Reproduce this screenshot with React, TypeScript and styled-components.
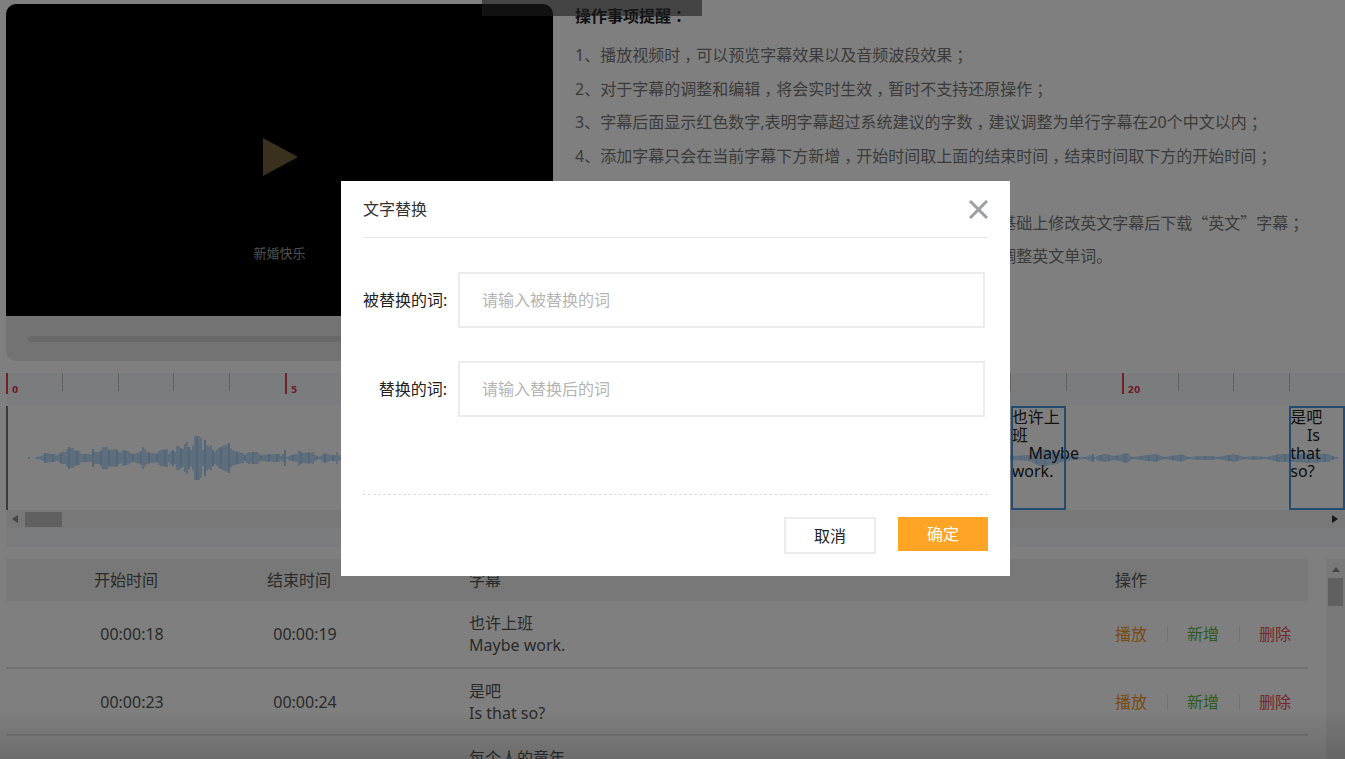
import React from 'react';
import styled, { createGlobalStyle, css } from 'styled-components';

const sans = `"Noto Sans", "Noto Sans CJK SC", sans-serif`;

const GlobalStyle = createGlobalStyle`
  *, *::before, *::after { box-sizing: border-box; }
  body {
    margin: 0;
    background: #fff;
    color: #333;
    font-family: ${sans};
    font-size: 16px;
    line-height: 22px;
  }
  button, input { font: inherit; }
`;

const Page = styled.div`
  height: 100vh;
  overflow: hidden;
  display: flex;
  flex-direction: column;
  padding: 4px 0 0 6px;
`;

const TopSection = styled.section`
  display: flex;
  flex-shrink: 0;
  gap: 22px;
  margin-bottom: 12px;
`;

const Player = styled.div`
  flex: 0 0 547px;
  border-radius: 10px;
  overflow: hidden;
  background: #e6e6e6;
`;

const Screen = styled.div`
  display: flex;
  flex-direction: column;
  align-items: center;
  height: 312px;
  padding-top: 134px;
  background: #000;
`;

const PlayButton = styled.button`
  display: flex;
  padding: 0;
  border: 0;
  background: none;
  color: #72603a;
`;

const VideoCaption = styled.p`
  margin: 66px 0 0;
  color: #a0a0a0;
  font-size: 13px;
`;

const Controls = styled.div`
  display: flex;
  align-items: center;
  height: 45px;
  padding: 0 22px;
`;

const Progress = styled.div`
  flex: 1;
  height: 6px;
  border-radius: 3px;
  background: #d2d2d2;
`;

const Tips = styled.div`
  flex: 1;
  min-width: 0;
  white-space: nowrap;
`;

const TipsTitle = styled.h2`
  margin: 0 0 11px;
  color: #222;
  font-size: 16px;
  font-weight: 700;
  line-height: 24px;
`;

const TipsList = styled.ul`
  display: flex;
  flex-direction: column;
  justify-content: space-between;
  height: 234px;
  margin: 0;
  padding: 0;
  list-style: none;
  color: #777;
  line-height: 33px;
`;

const Quoted = styled.span`
  font-family: "Noto Sans CJK SC", sans-serif;
  line-height: 16px;
`;

const CenteredMark = styled.span`
  margin: 0 -4px 0 4px;
`;

const Timeline = styled.section`
  flex-shrink: 0;
  padding-bottom: 19px;
  margin-bottom: 12px;
  background: #f6f8fc;
`;

const Ruler = styled.div`
  display: grid;
  grid-template-columns: repeat(24, 1fr);
  height: 33px;
`;

const Tick = styled.div<{ $major: boolean }>`
  display: flex;
  align-items: flex-end;
  height: ${p => (p.$major ? 21 : 18)}px;
  padding-left: 4px;
  border-left: ${p => (p.$major ? '2px solid #e0454f' : '1px solid #c4c0b8')};
  color: #e0354b;
  font: 700 9px/8px "DejaVu Sans", sans-serif;
`;

const Track = styled.div`
  position: relative;
  height: 104px;
  border-left: 2px solid #777;
  background: #fff;
`;

const Region = styled.div<{ $second: number }>`
  position: absolute;
  top: 0;
  left: ${p => (p.$second / 24) * 100}%;
  width: calc(100% / 24);
  height: 104px;
  padding: 2px 0 0 1px;
  outline: 2px solid #4a98e0;
  outline-offset: -2px;
  color: #222;
  line-height: 18px;
  white-space: pre-line;
`;

const HScroll = styled.div`
  display: flex;
  align-items: center;
  height: 18px;
  padding: 0 7px 0 6px;
  background: #f0f0f0;
`;

const HThumb = styled.div`
  width: 37px;
  height: 15px;
  margin: 0 auto 0 7px;
  background: #c1c1c1;
`;

const ListSection = styled.section`
  display: flex;
  flex: 1;
  min-height: 0;
  gap: 18px;
`;

const TableArea = styled.div`
  flex: 1;
  overflow: hidden;
`;

const Table = styled.table`
  width: 100%;
  table-layout: fixed;
  border-collapse: collapse;
  color: #555;
`;

const Th = styled.th<{ $centered?: boolean; $width?: string }>`
  width: ${p => p.$width ?? 'auto'};
  height: 42px;
  padding: 0;
  background: #f0f0f0;
  font-weight: 400;
  text-align: ${p => (p.$centered ? 'center' : 'left')};
`;

const Td = styled.td<{ $centered?: boolean }>`
  height: 67px;
  padding: 0;
  border-bottom: 2px solid #e6e6e6;
  text-align: ${p => (p.$centered ? 'center' : 'left')};
  ${p => p.$centered && css`padding-left: 12px;`}
`;

const Actions = styled.div`
  display: flex;
  align-items: center;
`;

const Action = styled.button<{ $color: string }>`
  padding: 0 20px 0 19px;
  border: 0;
  border-right: 1px solid #e8e8e8;
  background: none;
  color: ${p => p.$color};
  line-height: 16px;
  &:first-child { padding-left: 0; }
  &:last-child { border-right: 0; padding-right: 0; }
`;

const VScroll = styled.div`
  display: flex;
  flex-direction: column;
  align-items: center;
  gap: 6px;
  width: 19px;
  padding-top: 7px;
  background: #f0f0f0;
`;

const VThumb = styled.div`
  width: 15px;
  height: 28px;
  background: #c1c1c1;
`;

const Backdrop = styled.div`
  position: fixed;
  inset: 0;
  display: flex;
  align-items: center;
  justify-content: center;
  padding: 0 0 2px 6px;
  background: rgba(0, 0, 0, 0.5);
`;

const BottomShade = styled.div`
  position: fixed;
  inset: auto 0 0 0;
  height: 48px;
  background: linear-gradient(rgba(0, 0, 0, 0), rgba(0, 0, 0, 0.14));
`;

const TopBadge = styled.div`
  position: fixed;
  top: 0;
  left: 482px;
  width: 220px;
  height: 16px;
  background: rgba(28, 28, 28, 0.6);
`;

const Dialog = styled.form`
  position: relative;
  width: 669px;
  padding: 0 22px 22px;
  background: #fff;
`;

const DialogHeader = styled.header`
  display: flex;
  align-items: center;
  justify-content: space-between;
  height: 57px;
  margin-bottom: 34px;
  border-bottom: 1px solid #e6e6e6;
`;

const DialogTitle = styled.h1`
  margin: 0;
  color: #333;
  font-size: 16px;
  font-weight: 400;
`;

const CloseButton = styled.button`
  display: flex;
  padding: 0;
  border: 0;
  background: none;
  color: #999fa3;
`;

const Field = styled.div`
  display: grid;
  grid-template-columns: 84px 1fr;
  align-items: center;
  gap: 11px;
  margin: 0 3px 33px 0;
`;

const Label = styled.label`
  color: #222;
  text-align: right;
  white-space: nowrap;
`;

const TextInput = styled.input`
  width: 100%;
  height: 56px;
  padding: 0 22px;
  border: 2px solid #ececec;
  background: #fff;
  color: #333;
  outline: none;
  &::placeholder { color: #b4b4b4; opacity: 1; }
`;

const DialogFooter = styled.footer`
  display: flex;
  align-items: flex-start;
  justify-content: flex-end;
  gap: 22px;
  margin-top: 77px;
  padding-top: 22px;
  border-top: 1px dashed #ddd;
`;

const FooterButton = styled.button<{ $primary?: boolean }>`
  width: ${p => (p.$primary ? 90 : 92)}px;
  height: ${p => (p.$primary ? 34 : 37)}px;
  padding: 0;
  border: ${p => (p.$primary ? '0' : '2px solid #ececec')};
  background: ${p => (p.$primary ? '#ffa424' : '#fff')};
  color: ${p => (p.$primary ? '#fff' : '#222')};
`;

const tips = [
  '1、播放视频时，可以预览字幕效果以及音频波段效果；',
  '2、对于字幕的调整和编辑，将会实时生效，暂时不支持还原操作；',
  '3、字幕后面显示红色数字,表明字幕超过系统建议的字数，建议调整为单行字幕在20个中文以内；',
  '4、添加字幕只会在当前字幕下方新增，开始时间取上面的结束时间，结束时间取下方的开始时间；',
  '5、下载字幕时，可以选择中文字幕或英文字幕；',
  '6、如需下载英文字幕，请先确认中文字幕无误，在已翻译的基础上修改英文字幕后下载“英文”字幕；',
  '7、如果英文翻译的内容与中文不符，您可以在编辑框中手动调整英文单词。',
];

// Commas, colons and semicolons sit in the middle of their em box; quotes are full width.
const Punctuated = ({ text }: { text: string }) => (
  <>
    {text.split(/([，；：]|“[^”]*”)/).map((part, i) => {
      if (/^[，；：]$/.test(part)) return <CenteredMark key={i}>{part}</CenteredMark>;
      if (part.startsWith('“')) return <Quoted key={i}>{part}</Quoted>;
      return part;
    })}
  </>
);

const rows = [
  { start: '00:00:18', end: '00:00:19', zh: '也许上班', en: 'Maybe work.' },
  { start: '00:00:23', end: '00:00:24', zh: '是吧', en: 'Is that so?' },
  { start: '00:00:25', end: '00:00:27', zh: '每个人的童年', en: "Everyone's childhood." },
];

// [x, half height] pairs of the audio envelope
const envelope: [number, number][] = [
  [18, 1], [23, 0], [27, 0], [29, 1], [34, 3], [36, 5], [45, 4], [49, 2], [51, 6], [57, 6], [59, 11], [63, 11],
  [66, 8], [70, 7], [73, 4], [82, 4], [84, 9], [86, 6], [90, 6], [94, 11], [98, 11], [99, 8], [103, 10], [105, 7],
  [107, 11], [109, 6], [112, 6], [114, 8], [121, 6], [124, 4], [131, 6], [134, 11], [138, 6], [149, 4],
  [151, 10], [153, 8], [158, 9], [160, 4], [163, 9], [166, 6], [168, 12], [172, 11], [175, 8], [177, 20],
  [179, 12], [183, 8], [186, 22], [192, 22], [194, 8], [196, 18], [199, 10], [202, 14], [205, 5], [208, 8],
  [212, 12], [217, 13], [220, 15], [223, 8], [229, 6], [233, 6], [236, 3], [239, 6], [248, 6], [252, 3],
  [262, 4], [270, 4], [273, 2], [276, 8], [278, 1], [282, 3], [288, 4], [291, 9], [293, 5], [304, 6],
  [307, 2], [311, 1], [315, 5], [322, 3], [326, 3], [328, 6], [331, 1], [360, 6],
  [400, 9], [450, 5], [520, 11], [600, 6], [700, 8], [800, 4], [900, 5], [1000, 2], [1020, 3], [1033, 9],
  [1048, 6], [1056, 3], [1076, 1], [1084, 4], [1086, 1], [1090, 3], [1096, 4], [1106, 2], [1118, 5], [1124, 1],
  [1132, 2], [1146, 4], [1156, 1], [1162, 2], [1173, 4], [1180, 1], [1190, 2], [1204, 2], [1207, 1], [1215, 2],
  [1224, 4], [1236, 1], [1246, 2], [1258, 1], [1270, 4], [1285, 4], [1300, 5], [1320, 4], [1326, 1], [1332, 1],
];

function amplitude(x: number) {
  const i = envelope.findIndex(([px]) => px > x);
  if (i < 1) return 0;
  const [x0, y0] = envelope[i - 1];
  const [x1, y1] = envelope[i];
  return y0 + ((y1 - y0) * (x - x0)) / (x1 - x0);
}

const bars = Array.from({ length: 655 }, (_, i) => {
  const x = 20 + i * 2;
  const a = amplitude(x) * (i % 5 === 1 ? 0.9 : 1);
  return { x, h: a < 0.4 ? 0 : Math.max(1, a) };
});

const Waveform = () => (
  <svg width="100%" height="104" viewBox="0 0 1337 104" preserveAspectRatio="none" aria-hidden="true">
    {bars.map(({ x, h }, i) => (
      <rect key={x} x={x} y={52 - h} width="2" height={h * 2} fill={i % 4 ? '#bcdcfa' : '#a8cdf2'} />
    ))}
  </svg>
);

const Arrow = ({ d, color, w = 6, h = 8 }: { d: string; color: string; w?: number; h?: number }) => (
  <svg width={w} height={h} viewBox={`0 0 ${w} ${h}`} aria-hidden="true"><path d={d} fill={color} /></svg>
);

export default function App() {
  return (
    <>
      <GlobalStyle />
      <Page>
        <TopSection>
          <Player>
            <Screen>
              <PlayButton aria-label="播放视频">
                <svg width="36" height="38" viewBox="0 0 36 38"><path d="M1 0L36 19L1 38Z" fill="currentColor" /></svg>
              </PlayButton>
              <VideoCaption>新婚快乐</VideoCaption>
            </Screen>
            <Controls><Progress /></Controls>
          </Player>
          <Tips>
            <TipsTitle><Punctuated text="操作事项提醒：" /></TipsTitle>
            <TipsList>
              {tips.map(tip => <li key={tip}><Punctuated text={tip} /></li>)}
            </TipsList>
          </Tips>
        </TopSection>

        <Timeline>
          <Ruler>
            {Array.from({ length: 24 }, (_, s) => (
              <Tick key={s} $major={s % 5 === 0}>{s % 5 === 0 ? s : ''}</Tick>
            ))}
          </Ruler>
          <Track>
            <Waveform />
            <Region $second={18}>{'也许上班\n\u00a0\u00a0\u00a0\u00a0Maybe work.'}</Region>
            <Region $second={23}>{'是吧\n\u00a0\u00a0\u00a0\u00a0Is that so?'}</Region>
          </Track>
          <HScroll>
            <Arrow d="M6 0V8L0 4Z" color="#8a8a8a" />
            <HThumb />
            <Arrow d="M0 0V8L6 4Z" color="#333" />
          </HScroll>
        </Timeline>

        <ListSection>
          <TableArea>
            <Table>
              <thead>
                <tr>
                  <Th $centered $width="240px">开始时间</Th>
                  <Th $centered $width="106px">结束时间</Th>
                  <Th $width="117px" aria-hidden="true" />
                  <Th>字幕</Th>
                  <Th $width="193px">操作</Th>
                </tr>
              </thead>
              <tbody>
                {rows.map(row => (
                  <tr key={row.start}>
                    <Td $centered>{row.start}</Td>
                    <Td $centered>{row.end}</Td>
                    <Td />
                    <Td>{row.zh}<br />{row.en}</Td>
                    <Td>
                      <Actions>
                        <Action $color="#f0962c">播放</Action>
                        <Action $color="#5cb648">新增</Action>
                        <Action $color="#e8505a">删除</Action>
                      </Actions>
                    </Td>
                  </tr>
                ))}
              </tbody>
            </Table>
          </TableArea>
          <VScroll>
            <Arrow d="M0 6L4 1L8 6Z" color="#8a8a8a" w={8} h={6} />
            <VThumb />
          </VScroll>
        </ListSection>
      </Page>

      <Backdrop>
        <BottomShade />
        <Dialog role="dialog" aria-labelledby="dialog-title" onSubmit={e => e.preventDefault()}>
          <DialogHeader>
            <DialogTitle id="dialog-title">文字替换</DialogTitle>
            <CloseButton type="button" aria-label="关闭">
              <svg width="19" height="19" viewBox="0 0 19 19" fill="none" stroke="currentColor" strokeWidth="3">
                <path d="M1 1L18 18M18 1L1 18" />
              </svg>
            </CloseButton>
          </DialogHeader>
          <Field>
            <Label htmlFor="from">被替换的词:</Label>
            <TextInput id="from" placeholder="请输入被替换的词" />
          </Field>
          <Field>
            <Label htmlFor="to">替换的词:</Label>
            <TextInput id="to" placeholder="请输入替换后的词" />
          </Field>
          <DialogFooter>
            <FooterButton type="button">取消</FooterButton>
            <FooterButton type="submit" $primary>确定</FooterButton>
          </DialogFooter>
        </Dialog>
      </Backdrop>
      <TopBadge />
    </>
  );
}
